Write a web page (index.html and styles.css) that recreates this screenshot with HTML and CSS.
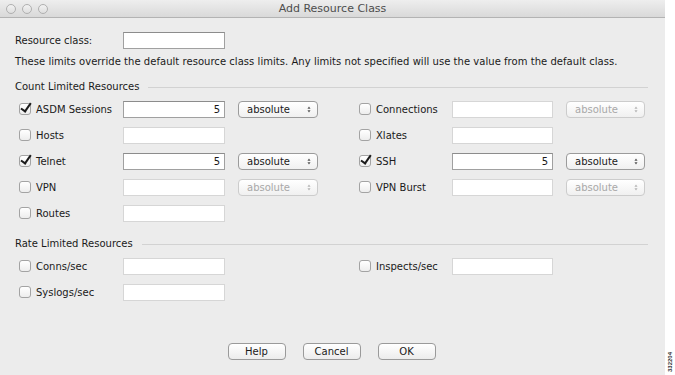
FILE: index.html
```html
<!DOCTYPE html>
<html lang="en">
<head>
    <meta charset="UTF-8">
    <title>Add Resource Class</title>
    <link rel="stylesheet" href="styles.css">
</head>
<body>
    <div class="screen">
        <div class="window">
            <div class="titlebar">
                <div class="lights"><span></span><span></span><span></span></div>
                <div class="title">Add Resource Class</div>
            </div>
            <div class="content">
                <div class="class-row">
                    <span class="class-label">Resource class:</span>
                    <span class="field dark"></span>
                </div>
                <p class="note">These limits override the default resource class limits. Any limits not specified will use the value from the default class.</p>

                <div class="group-title">Count Limited Resources</div>
                <div class="rows">
                    <div class="row">
                        <div class="cell">
                            <span class="name"><span class="check on"></span>ASDM Sessions</span>
                            <span class="field dark">5</span>
                            <span class="select">absolute<svg class="arrows" viewBox="0 0 5 9"><path d="M2.5 0.5 L4.5 3.5 H0.5 Z M2.5 8.5 L4.5 5.5 H0.5 Z"/></svg></span>
                        </div>
                        <div class="cell right">
                            <span class="name"><span class="check"></span>Connections</span>
                            <span class="field"></span>
                            <span class="select off">absolute<svg class="arrows" viewBox="0 0 5 9"><path d="M2.5 0.5 L4.5 3.5 H0.5 Z M2.5 8.5 L4.5 5.5 H0.5 Z"/></svg></span>
                        </div>
                    </div>
                    <div class="row">
                        <div class="cell">
                            <span class="name"><span class="check"></span>Hosts</span>
                            <span class="field"></span>
                        </div>
                        <div class="cell right">
                            <span class="name"><span class="check"></span>Xlates</span>
                            <span class="field"></span>
                        </div>
                    </div>
                    <div class="row">
                        <div class="cell">
                            <span class="name"><span class="check on"></span>Telnet</span>
                            <span class="field dark">5</span>
                            <span class="select">absolute<svg class="arrows" viewBox="0 0 5 9"><path d="M2.5 0.5 L4.5 3.5 H0.5 Z M2.5 8.5 L4.5 5.5 H0.5 Z"/></svg></span>
                        </div>
                        <div class="cell right">
                            <span class="name"><span class="check on"></span>SSH</span>
                            <span class="field dark">5</span>
                            <span class="select">absolute<svg class="arrows" viewBox="0 0 5 9"><path d="M2.5 0.5 L4.5 3.5 H0.5 Z M2.5 8.5 L4.5 5.5 H0.5 Z"/></svg></span>
                        </div>
                    </div>
                    <div class="row">
                        <div class="cell">
                            <span class="name"><span class="check"></span>VPN</span>
                            <span class="field"></span>
                            <span class="select off">absolute<svg class="arrows" viewBox="0 0 5 9"><path d="M2.5 0.5 L4.5 3.5 H0.5 Z M2.5 8.5 L4.5 5.5 H0.5 Z"/></svg></span>
                        </div>
                        <div class="cell right">
                            <span class="name"><span class="check"></span>VPN Burst</span>
                            <span class="field"></span>
                            <span class="select off">absolute<svg class="arrows" viewBox="0 0 5 9"><path d="M2.5 0.5 L4.5 3.5 H0.5 Z M2.5 8.5 L4.5 5.5 H0.5 Z"/></svg></span>
                        </div>
                    </div>
                    <div class="row">
                        <div class="cell">
                            <span class="name"><span class="check"></span>Routes</span>
                            <span class="field"></span>
                        </div>
                    </div>
                </div>

                <div class="group-title rate">Rate Limited Resources</div>
                <div class="rows rate-rows">
                    <div class="row">
                        <div class="cell">
                            <span class="name"><span class="check"></span>Conns/sec</span>
                            <span class="field"></span>
                        </div>
                        <div class="cell right">
                            <span class="name"><span class="check"></span>Inspects/sec</span>
                            <span class="field"></span>
                        </div>
                    </div>
                    <div class="row">
                        <div class="cell">
                            <span class="name"><span class="check"></span>Syslogs/sec</span>
                            <span class="field"></span>
                        </div>
                    </div>
                </div>

                <div class="buttons">
                    <span class="btn">Help</span>
                    <span class="btn">Cancel</span>
                    <span class="btn">OK</span>
                </div>
            </div>
        </div>
        <div class="strip"><span>332204</span></div>
    </div>
</body>
</html>
```

FILE: styles.css
```css
body {
    margin: 0;
    padding: 0;
    background-color: #ffffff;
    font-family: "DejaVu Sans", Verdana, sans-serif;
    font-size: 10px;
    color: #1a1a1a;
}
.screen {
    display: flex;
    width: 675px;
    height: 375px;
    overflow: hidden;
}
.window {
    width: 665px;
    height: 375px;
    flex: none;
    display: flex;
    flex-direction: column;
    background-color: #ececec;
}
.titlebar {
    height: 17px;
    flex: none;
    display: flex;
    align-items: center;
    position: relative;
    background: linear-gradient(#eeeeee, #d9d9d9);
    border-bottom: 1px solid #b3b3b3;
}
.lights {
    display: flex;
    gap: 6px;
    padding-left: 6px;
}
.lights span {
    width: 8px;
    height: 8px;
    border: 1px solid #b0b0b0;
    border-radius: 50%;
    background: linear-gradient(#f2f2f2, #dedede);
}
.title {
    position: absolute;
    left: 0;
    right: 0;
    text-align: center;
    font-size: 11px;
    color: #4d4d4d;
}
.content {
    flex: 1;
    display: flex;
    flex-direction: column;
    padding: 14px 17px 15px 15px;
}
.class-row {
    display: flex;
    align-items: center;
    height: 17px;
}
.class-label {
    width: 108px;
}
.note {
    margin: 6px 0 0;
    line-height: 14px;
    white-space: nowrap;
    letter-spacing: 0.04px;
}
.group-title {
    display: flex;
    align-items: center;
    margin-top: 11px;
    line-height: 14px;
}
.group-title::after {
    content: "";
    flex: 1;
    height: 1px;
    margin-left: 9px;
    background-color: #d2d2d2;
}
.rows {
    margin-top: 2px;
    padding-left: 4px;
}
.rate-rows {
    margin-top: 2px;
}
.row {
    display: flex;
    height: 26px;
    align-items: center;
}
.cell {
    width: 340px;
    flex: none;
    display: flex;
    align-items: center;
}
.cell.right {
    width: 289px;
}
.name {
    width: 104px;
    flex: none;
    display: flex;
    align-items: center;
    white-space: nowrap;
}
.cell.right .name {
    width: 93px;
}
.check {
    width: 10px;
    height: 10px;
    margin-right: 5px;
    border: 1px solid #a3a3a3;
    border-radius: 3px;
    background: linear-gradient(#ffffff, #ededed);
    position: relative;
    flex: none;
}
.check.on::after {
    content: "";
    position: absolute;
    left: 3px;
    top: -3px;
    width: 4px;
    height: 9px;
    border-right: 2px solid #1a1a1a;
    border-bottom: 2px solid #1a1a1a;
    transform: rotate(35deg);
}
.field {
    width: 100px;
    height: 15px;
    flex: none;
    border: 1px solid #d6d6d6;
    background-color: #ffffff;
    text-align: right;
    line-height: 15px;
    box-sizing: content-box;
}
.field.dark {
    border-color: #a0a0a0;
    border-top-color: #8c8c8c;
    width: 96px;
    padding-right: 4px;
}
.cell.right .field {
    width: 99px;
}
.cell.right .field.dark {
    width: 95px;
}
.select {
    width: 70px;
    height: 15px;
    flex: none;
    margin-left: 13px;
    padding-left: 8px;
    border: 1px solid #9b9b9b;
    border-radius: 4px;
    background: linear-gradient(#ffffff, #f0f0f0);
    line-height: 15px;
    position: relative;
}
.arrows {
    position: absolute;
    right: 6px;
    top: 4px;
    width: 4px;
    height: 7px;
    fill: #555555;
}
.select.off {
    color: #a8a8a8;
    border-color: #cccccc;
}
.select.off .arrows {
    fill: #b5b5b5;
}
.cell.right .select {
    width: 69px;
}
.buttons {
    margin-top: auto;
    display: flex;
    justify-content: center;
    gap: 17px;
}
.btn {
    width: 56px;
    height: 15px;
    border: 1px solid #9a9a9a;
    border-radius: 4px;
    background: linear-gradient(#ffffff, #ececec);
    text-align: center;
    line-height: 15px;
}
.strip {
    width: 10px;
    display: flex;
    align-items: flex-end;
    justify-content: center;
    padding-bottom: 3px;
    box-sizing: border-box;
}
.strip span {
    writing-mode: vertical-rl;
    transform: rotate(180deg);
    font-family: "Liberation Sans", sans-serif;
    font-size: 6px;
    font-weight: bold;
    color: #333333;
}
```
